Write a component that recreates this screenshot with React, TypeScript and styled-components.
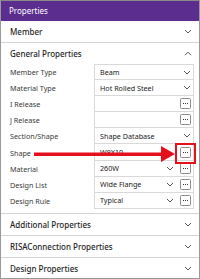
import React from 'react';
import styled, { createGlobalStyle } from 'styled-components';

const GlobalStyle = createGlobalStyle`
  html, body { margin: 0; padding: 0; background: #ffffff; }
  body { font-family: "Noto Sans", "Open Sans", sans-serif; }
`;

const Panel = styled.div`
  position: relative;
  width: 200px;
  height: 279px;
  box-sizing: border-box;
  border: 1px solid #9a9a9a;
  border-top-color: #8a8a8a;
  background: #ffffff;
  overflow: hidden;
`;

const Header = styled.div`
  height: 20px;
  background: #5a2d8e;
  color: #ffffff;
  font-size: 8px;
  line-height: 20px;
  padding-left: 8px;
`;

const SectionHead = styled.div<{ $open?: boolean }>`
  display: flex;
  align-items: center;
  justify-content: space-between;
  height: 21px;
  padding: 0 7px 0 9px;
  border-bottom: ${(p) => (p.$open ? 'none' : '1px solid #d4d4d4')};
  font-size: 8px;
  font-weight: 500;
  color: #1e1e1e;
`;

const Chevron = ({ up }: { up?: boolean }) => (
  <svg width="8" height="5" viewBox="0 0 8 5">
    <path
      d={up ? 'M1 4.2 L4 1.2 L7 4.2' : 'M1 1 L4 4 L7 1'}
      fill="none"
      stroke="#555"
      strokeWidth="1"
    />
  </svg>
);

const Props = styled.div`
  padding: 0 5px 4px 9px;
  border-bottom: 1px solid #d4d4d4;
`;

const Row = styled.div`
  display: grid;
  grid-template-columns: 84px 1fr;
  height: 16.1px;
`;

const Label = styled.div`
  display: flex;
  align-items: center;
  font-size: 7.2px;
  color: #3a3a3a;
`;

const Value = styled.div<{ $first?: boolean }>`
  display: flex;
  align-items: center;
  gap: 6px;
  padding: 0 2px 0 5px;
  border: 1px solid #d9d9d9;
  border-top: ${(p) => (p.$first ? '1px solid #d9d9d9' : 'none')};
  font-size: 7.2px;
  color: #222222;
`;

const ValueText = styled.span`
  flex: 1;
  white-space: nowrap;
  overflow: hidden;
`;

const SmallChevron = styled.div`
  width: 8px;
  display: flex;
  justify-content: center;
`;

const DotsButton = () => (
  <svg width="11" height="11" viewBox="0 0 11 11">
    <rect x="0.5" y="0.5" width="10" height="10" rx="1" fill="#fff" stroke="#8c8c8c" />
    <rect x="3" y="5" width="1" height="1" fill="#333" />
    <rect x="5" y="5" width="1" height="1" fill="#333" />
    <rect x="7" y="5" width="1" height="1" fill="#333" />
  </svg>
);

const Highlight = styled.div`
  position: absolute;
  left: 174px;
  top: 142px;
  width: 17px;
  height: 17px;
  border: 2px solid #e5101c;
`;

const Arrow = styled.svg`
  position: absolute;
  left: 33px;
  top: 144px;
`;

type Prop = { label: string; value: string; select?: boolean; dots?: boolean };

const rows: Prop[] = [
  { label: 'Member Type', value: 'Beam', select: true },
  { label: 'Material Type', value: 'Hot Rolled Steel', select: true },
  { label: 'I Release', value: '', dots: true },
  { label: 'J Release', value: '', dots: true },
  { label: 'Section/Shape', value: 'Shape Database', select: true },
  { label: 'Shape', value: 'W8X10', dots: true },
  { label: 'Material', value: '260W', select: true, dots: true },
  { label: 'Design List', value: 'Wide Flange', select: true, dots: true },
  { label: 'Design Rule', value: 'Typical', select: true, dots: true },
];

const App = () => (
  <>
    <GlobalStyle />
    <Panel>
      <Header>Properties</Header>
      <SectionHead>
        Member
        <Chevron />
      </SectionHead>
      <SectionHead $open>
        General Properties
        <Chevron up />
      </SectionHead>
      <Props>
        {rows.map((r, i) => (
          <Row key={r.label}>
            <Label>{r.label}</Label>
            <Value $first={i === 0}>
              <ValueText>{r.value}</ValueText>
              {r.select && (
                <SmallChevron>
                  <Chevron />
                </SmallChevron>
              )}
              {r.dots && <DotsButton />}
            </Value>
          </Row>
        ))}
      </Props>
      <SectionHead>
        Additional Properties
        <Chevron />
      </SectionHead>
      <SectionHead>
        RISAConnection Properties
        <Chevron />
      </SectionHead>
      <SectionHead>
        Design Properties
        <Chevron />
      </SectionHead>
      <Highlight />
      <Arrow width="142" height="18" viewBox="0 0 142 18">
        <rect x="0" y="7.5" width="128" height="3.5" fill="#e5101c" />
        <polygon points="127,1 141,9 127,17" fill="#e5101c" />
      </Arrow>
    </Panel>
  </>
);

export default App;
